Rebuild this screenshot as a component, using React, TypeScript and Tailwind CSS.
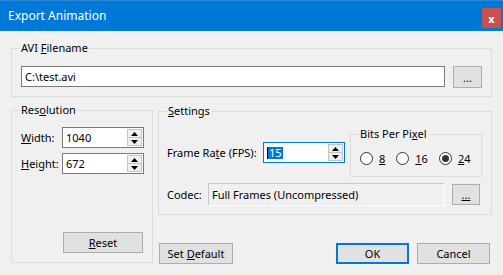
import React from 'react';

const FONT = "font-['Noto_Sans','DejaVu_Sans',sans-serif]";

function Group({ label, className, children }: { label: React.ReactNode; className: string; children: React.ReactNode }) {
  return (
    <div className={`relative border border-[#dcdcdc] ${className}`}>
      <span className="absolute -top-[9px] left-[7px] whitespace-nowrap bg-[#f0f0f0] px-[2px] leading-[16px]">{label}</span>
      {children}
    </div>
  );
}

function Btn({ children, className = '', primary = false }: { children: React.ReactNode; className?: string; primary?: boolean }) {
  return (
    <button
      type="button"
      className={`flex h-[21px] items-center justify-center bg-[#e1e1e1] leading-none ${
        primary ? 'border-2 border-[#0078d7]' : 'border border-[#adadad]'
      } ${className}`}
    >
      <span className="whitespace-nowrap">{children}</span>
    </button>
  );
}

function Arrow({ up }: { up?: boolean }) {
  return (
    <svg width="7" height="4" viewBox="0 0 7 4" className="block">
      {up ? <path d="M3.5 0 L7 4 L0 4 Z" fill="#000" /> : <path d="M0 0 L7 0 L3.5 4 Z" fill="#000" />}
    </svg>
  );
}

function Spin({ value, focused = false }: { value: React.ReactNode; focused?: boolean }) {
  return (
    <div
      className={`flex h-[21px] w-[82px] shrink-0 bg-white border ${focused ? 'border-[#0078d7]' : 'border-[#7a7a7a]'}`}
    >
      <div className="flex flex-1 items-center pl-[3px] leading-none">{value}</div>
      <div className="my-px mr-px flex w-[15px] flex-col">
        <div className="flex flex-1 items-center justify-center border border-[#c4c4c4] bg-[#f0f0f0]">
          <Arrow up />
        </div>
        <div className="flex flex-1 items-center justify-center border border-t-0 border-[#c4c4c4] bg-[#f0f0f0]">
          <Arrow />
        </div>
      </div>
    </div>
  );
}

function Radio({ label, checked = false }: { label: React.ReactNode; checked?: boolean }) {
  return (
    <div className="flex items-center gap-[6px]">
      <span className="flex h-[13px] w-[13px] items-center justify-center rounded-full border border-[#333333] bg-white">
        {checked && <span className="h-[7px] w-[7px] rounded-full bg-[#333333]" />}
      </span>
      <span className="leading-none">{label}</span>
    </div>
  );
}

export default function App() {
  return (
    <div className={`h-[275px] w-[503px] overflow-hidden bg-[#f0f0f0] text-[11px] text-black ${FONT}`}>
      <div className="flex h-[31px] items-center justify-between border-t border-[#2a88d8] bg-[#0078d7] pl-2 pr-[2px]">
        <span className="text-[12px] leading-none text-white">Export Animation</span>
        <div className="mt-[4px] flex h-[20px] w-[19px] items-center justify-center bg-[#c75050] text-[11px] font-bold leading-none text-white">
          x
        </div>
      </div>

      <div className="flex flex-col px-[11px] pt-[17px]">
        <Group label={<>AVI <u>F</u>ilename</>} className="h-[49px] w-[481px]">
          <div className="flex items-start gap-[8px] pl-[9px] pt-[17px]">
            <div className="flex h-[21px] w-[424px] items-center border border-[#7a7a7a] bg-white pl-[3px] leading-none">
              C:\test.avi
            </div>
            <Btn className="h-[22px] w-[29px]">...</Btn>
          </div>
        </Group>

        <div className="mt-[13px] flex items-start gap-[5px]">
          <Group label={<>Res<u>o</u>lution</>} className="flex h-[153px] w-[143px] flex-col pl-[9px] pt-[16px] pb-[9px]">
            <div className="flex items-center">
              <span className="w-[41px] whitespace-nowrap leading-none"><u>W</u>idth:</span>
              <Spin value="1040" />
            </div>
            <div className="mt-[5px] flex items-center">
              <span className="w-[41px] whitespace-nowrap leading-none"><u>H</u>eight:</span>
              <Spin value="672" />
            </div>
            <Btn className="ml-[42px] mt-auto w-[80px]"><u>R</u>eset</Btn>
          </Group>

          <div className="mt-px flex h-[153px] w-[334px] flex-col">
            <Group label={<><u>S</u>ettings</>} className="h-[104px] w-[334px] pl-[8px] pr-[9px]">
              <div className="flex items-start">
                <div className="mt-[30px] flex items-center">
                  <span className="w-[96px] whitespace-nowrap leading-none">Frame Ra<u>t</u>e (FPS):</span>
                  <Spin
                    focused
                    value={
                      <span className="flex items-center">
                        <span className="h-[12px] w-px bg-black" />
                        <span className="bg-[#0078d7] px-px leading-[12px] text-white">15</span>
                      </span>
                    }
                  />
                </div>
                <Group label={<>Bits Per Pi<u>x</u>el</>} className="ml-[5px] mt-[22px] h-[43px] w-[132px]">
                  <div className="flex items-center gap-[11px] pl-[9px] pt-[17px]">
                    <Radio label={<u>8</u>} />
                    <Radio label={<><u>1</u>6</>} />
                    <Radio label={<><u>2</u>4</>} checked />
                  </div>
                </Group>
              </div>
              <div className="mt-[6px] flex items-center">
                <span className="w-[41px] leading-none">Codec:</span>
                <div className="flex h-[23px] w-[237px] items-center border border-[#c8c8c8] border-b-white border-r-white pl-[3px] leading-none">
                  Full Frames (Uncompressed)
                </div>
                <Btn className="ml-[7px] w-[28px]"><u>...</u></Btn>
              </div>
            </Group>

            <div className="mt-auto flex items-center pl-px pr-[2px]">
              <Btn className="w-[74px]">Set <u>D</u>efault</Btn>
              <div className="ml-auto flex gap-[8px]">
                <Btn primary className="w-[73px]">OK</Btn>
                <Btn className="w-[73px]">Cancel</Btn>
              </div>
            </div>
          </div>
        </div>
      </div>
    </div>
  );
}
